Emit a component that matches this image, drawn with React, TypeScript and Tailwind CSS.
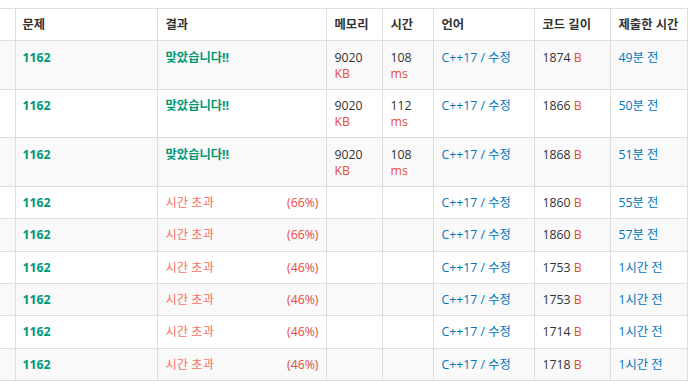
import React from "react";

type Row = {
  ac: boolean;
  mem?: string;
  time?: string;
  pct?: string;
  len: string;
  when: string;
};

const rows: Row[] = [
  { ac: true, mem: "9020", time: "108", len: "1874", when: "49분 전" },
  { ac: true, mem: "9020", time: "112", len: "1866", when: "50분 전" },
  { ac: true, mem: "9020", time: "108", len: "1868", when: "51분 전" },
  { ac: false, pct: "(66%)", len: "1860", when: "55분 전" },
  { ac: false, pct: "(66%)", len: "1860", when: "57분 전" },
  { ac: false, pct: "(46%)", len: "1753", when: "1시간 전" },
  { ac: false, pct: "(46%)", len: "1753", when: "1시간 전" },
  { ac: false, pct: "(46%)", len: "1714", when: "1시간 전" },
  { ac: false, pct: "(46%)", len: "1718", when: "1시간 전" },
];

const grid =
  "grid grid-cols-[15px_143px_169px_56px_51px_101px_76px_77px] border-b border-[#dddddd]";
const cell = "border-r border-[#dddddd] px-[7.5px] pt-[8.2px] pb-[7.1px]";

export default function App() {
  return (
    <div
      className="bg-white w-[695px] h-[387px] pt-2 text-[12.3px] leading-[16.1px] text-[#333333]"
      style={{ fontFamily: '"Open Sans", "Noto Sans CJK KR", sans-serif' }}
    >
      <div className="w-[688px] border-t border-[#dddddd]">
        <div className={`${grid} font-bold`}>
          <div className={cell}></div>
          <div className={cell}>문제</div>
          <div className={cell}>결과</div>
          <div className={cell}>메모리</div>
          <div className={cell}>시간</div>
          <div className={cell}>언어</div>
          <div className={cell}>코드 길이</div>
          <div className={cell}>제출한 시간</div>
        </div>
        {rows.map((r, i) => (
          <div
            key={i}
            className={`${grid} ${i % 2 === 0 ? "bg-[#f9f9f9]" : "bg-white"}`}
          >
            <div className={cell}></div>
            <div className={`${cell} font-bold text-[#009874]`}>1162</div>
            <div className={`${cell} flex justify-between`}>
              {r.ac ? (
                <span className="font-bold text-[#009874]">맞았습니다!!</span>
              ) : (
                <>
                  <span className="text-[#fa7268]">시간 초과</span>
                  <span className="text-[#e74c3c]">{r.pct}</span>
                </>
              )}
            </div>
            <div className={cell}>
              {r.mem && (
                <>
                  <div>{r.mem}</div>
                  <div className="text-[#e74c3c]">KB</div>
                </>
              )}
            </div>
            <div className={cell}>
              {r.time && (
                <>
                  <div>{r.time}</div>
                  <div className="text-[#e74c3c]">ms</div>
                </>
              )}
            </div>
            <div className={`${cell} text-[#0076c0]`}>C++17 / 수정</div>
            <div className={cell}>
              {r.len} <span className="text-[#e74c3c]">B</span>
            </div>
            <div className={`${cell} text-[#0076c0]`}>{r.when}</div>
          </div>
        ))}
      </div>
    </div>
  );
}
